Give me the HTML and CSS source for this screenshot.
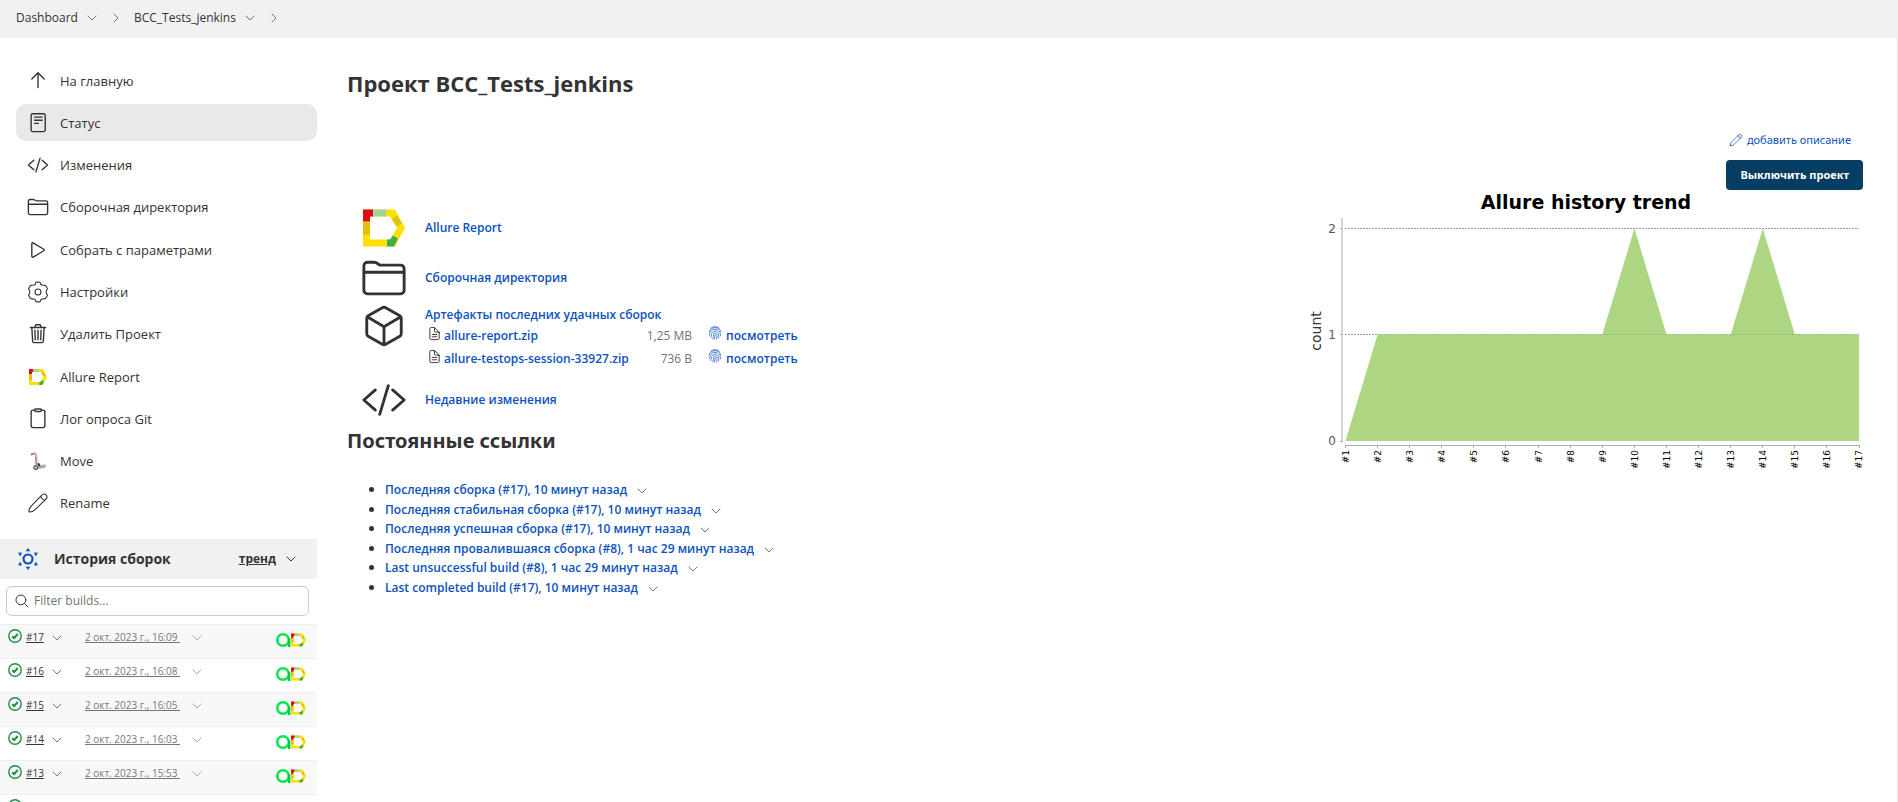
FILE: index.html
```html
<!DOCTYPE html>
<html lang="ru">
<head>
<meta charset="utf-8">
<title>BCC_Tests_jenkins [Jenkins]</title>
<link rel="stylesheet" href="styles.css">
</head>
<body>
<svg class="sprite" aria-hidden="true">
  <symbol id="chevron" viewBox="0 0 10 6"><path d="M1 1l4 4 4-4" class="line"/></symbol>
  <symbol id="chevron-right" viewBox="0 0 6 10"><path d="M1 1l4 4-4 4" class="line"/></symbol>
  <symbol id="up" viewBox="0 0 512 512"><path class="line" d="M112 208l144-144 144 144M256 70v336"/></symbol>
  <symbol id="status" viewBox="0 0 512 512"><rect class="line" x="96" y="40" width="328" height="416" rx="40"/><path class="line" d="M176 118h176M176 192h176M176 266h88"/></symbol>
  <symbol id="code" viewBox="0 0 512 512"><path class="line" d="M160 368L32 256l128-112M352 368l128-112-128-112M304 96l-96 320"/></symbol>
  <symbol id="folder" viewBox="0 0 512 512"><path class="line" d="M440 432H72a40 40 0 01-40-40V120a40 40 0 0140-40h75.89a40 40 0 0122.19 6.72l27.84 18.56a40 40 0 0022.19 6.72H440a40 40 0 0140 40v240a40 40 0 01-40 40zM32 192h448"/></symbol>
  <symbol id="play" viewBox="0 0 512 512"><path class="line" d="M112 111v290c0 17.44 17 28.52 31 20.16l247.9-148.37c12.12-7.25 12.12-26.33 0-33.58L143 90.84c-14-8.36-31 2.72-31 20.16z"/></symbol>
  <symbol id="gear" viewBox="0 0 20 20"><path class="thin" d="M8.1 1.2Q10 .8 11.9 1.2Q12.2 3.2 13.7 3.6Q15.2 3.9 16.7 4Q18 5.4 18.6 7.2Q17.4 8.6 17.4 10T18.6 12.8Q18 14.6 16.7 16Q15.2 16.1 13.7 16.4Q12.2 16.8 11.9 18.8Q10 19.2 8.1 18.8Q7.8 16.8 6.3 16.4Q4.8 16.1 3.3 16Q2 14.6 1.4 12.8Q2.6 11.4 2.6 10T1.4 7.2Q2 5.4 3.3 4Q4.8 3.9 6.3 3.6Q7.8 3.2 8.1 1.2z"/><circle class="thin" cx="10" cy="10" r="2.700"/></symbol>
  <symbol id="trash" viewBox="0 0 512 512"><path class="line" d="M112 104l20 320c.95 18.49 14.4 32 32 32h184c17.67 0 30.87-13.51 32-32l20-320M80 104h352M192 104V64a24 24 0 0124-24h80a24 24 0 0124 24v40M256 168v224M184 168l8 224M328 168l-8 224"/></symbol>
  <symbol id="allure" viewBox="0 0 42 37"><path fill="#ffe000" d="M0 0h32l10 18.500l-10 18.500H0zM7 7v23h20l7-11.500L27 7z" fill-rule="evenodd"/><path fill="#e30613" d="M0 0h10v7H7v5H0z"/><path fill="#a3d39c" d="M10 0h13v7H10z"/><path fill="#dfc00f" d="M0 13h7v12H0zM29 10l5-4 5 8-5 3z"/><path fill="#3fae49" d="M24 30h3l3-4 5 3-4 8h-7z"/></symbol>
  <symbol id="clipboard" viewBox="0 0 512 512"><path class="line" d="M336 48h32a48 48 0 0148 48v312a48 48 0 01-48 48H144a48 48 0 01-48-48V96a48 48 0 0148-48h32"/><rect class="line" x="176" y="24" width="160" height="56" rx="26"/></symbol>
  <symbol id="move" viewBox="0 0 20 20"><path d="M3.500 4.200l3.500-1.200 1 .6" stroke="#e2574c" stroke-width="1.500" fill="none"/><path d="M7.500 3l1.200 4-.4 6" stroke="#bbb" stroke-width="2" fill="none"/><path d="M7.500 6l1.200 8" stroke="#777" stroke-width=".7"/><circle cx="8" cy="16" r="1.800" fill="#bbb" stroke="#555" stroke-width="1"/><path d="M10 14.500l7-1.500v3l-7 1.500z" fill="#aaa"/><path d="M10 12l1.500 2.500" stroke="#333" stroke-width="2"/></symbol>
  <symbol id="pencil" viewBox="0 0 20 20"><path class="thin" d="M1.800 18.200Q1.600 15 4 12.600L13.200 3Q15.400.8 17.300 2.700T17 6.800L7.400 16Q5 18.400 1.800 18.200zM12.600 3.600Q13 6.800 16.400 7.400"/></symbol>
  <symbol id="cube" viewBox="0 0 512 512"><path class="line" d="M448 341.370V170.610A32 32 0 00432.110 143l-152-88.460a47.940 47.940 0 00-48.240 0L79.890 143A32 32 0 0064 170.610v170.760A32 32 0 0079.890 369l152 88.460a48 48 0 0048.240 0l152-88.460A32 32 0 00448 341.370zM69 154l187 110 187-110M256 464V264"/></symbol>
  <symbol id="doc" viewBox="0 0 512 512"><path class="line" d="M416 221.250V416a48 48 0 01-48 48H144a48 48 0 01-48-48V96a48 48 0 0148-48h98.750a32 32 0 0122.620 9.370l141.260 141.260a32 32 0 019.370 22.620zM256 56v120a32 32 0 0032 32h120M176 288h160M176 368h160"/></symbol>
  <symbol id="finger" viewBox="0 0 20 20"><path class="thin" d="M4 3a10 10 0 0112 0M1.500 8.500a9 9 0 0117 0M2 13.500c1-6 3-8.500 8-8.500s8 3 7.800 9M4 16.500c1.200-6 2-9 6-9s5.600 3 5.400 9.500M7 18.500c1.500-5 .5-8.500 3-8.500s3.400 3.500 2.300 9M10 12.500q.3 3-.8 6"/></symbol>
  <symbol id="search" viewBox="0 0 512 512"><circle class="line" cx="221" cy="221" r="157"/><path class="line" d="M338 338l110 110"/></symbol>
  <symbol id="sun" viewBox="0 0 20 22"><circle cx="10" cy="11" r="4.500" fill="none" stroke="#0b52bd" stroke-width="2.200"/><path fill="#0b52bd" d="M10 0l2.300 3.200H7.700zM10 22l2.300-3.200H7.700zM.2 4.400l4 .4-2.200 3.600zM19.800 4.400l-4 .4 2.200 3.600zM.2 17.600l4-.4-2.200-3.600zM19.800 17.600l-4-.4 2.200-3.600z"/></symbol>
  <symbol id="ok" viewBox="0 0 14 14"><circle cx="7" cy="7" r="6.200" fill="none" stroke="#1e8f45" stroke-width="1.400"/><path d="M4.200 7.200L6.200 9l3.600-4" fill="none" stroke="#1e8f45" stroke-width="2"/></symbol>
  <symbol id="testops" viewBox="0 0 16 16"><circle cx="7.500" cy="8" r="6.200" fill="none" stroke="#00e64d" stroke-width="2.600"/><path d="M14 6v9.500" stroke="#00c853" stroke-width="2.600"/></symbol>
</svg>

<nav class="crumbs" aria-label="Breadcrumbs">
  <a href="#">Dashboard</a><svg class="chev"><use href="#chevron"/></svg><svg class="chev-right"><use href="#chevron-right"/></svg>
  <a href="#">BCC_Tests_jenkins</a><svg class="chev"><use href="#chevron"/></svg><svg class="chev-right"><use href="#chevron-right"/></svg>
</nav>

<div class="page">
  <div class="side">
    <nav class="tasks">
      <a class="task" href="#"><svg><use href="#up"/></svg>На главную</a>
      <a class="task active" href="#"><svg><use href="#status"/></svg>Статус</a>
      <a class="task" href="#"><svg><use href="#code"/></svg>Изменения</a>
      <a class="task" href="#"><svg><use href="#folder"/></svg>Сборочная директория</a>
      <a class="task" href="#"><svg><use href="#play"/></svg>Собрать с параметрами</a>
      <a class="task" href="#"><svg><use href="#gear"/></svg>Настройки</a>
      <a class="task" href="#"><svg><use href="#trash"/></svg>Удалить Проект</a>
      <a class="task" href="#"><svg class="logo"><use href="#allure"/></svg>Allure Report</a>
      <a class="task" href="#"><svg><use href="#clipboard"/></svg>Лог опроса Git</a>
      <a class="task" href="#"><svg><use href="#move"/></svg>Move</a>
      <a class="task" href="#"><svg><use href="#pencil"/></svg>Rename</a>
    </nav>
    <section class="history">
      <header class="history-head">
        <svg class="sun"><use href="#sun"/></svg>
        <h2>История сборок</h2>
        <a href="#">тренд</a>
        <svg class="chev dark"><use href="#chevron"/></svg>
      </header>
      <label class="filter"><svg><use href="#search"/></svg><input type="text" placeholder="Filter builds..." aria-label="Filter builds"></label>
      <div class="builds">
        <div class="build"><svg class="ok"><use href="#ok"/></svg><a class="num" href="#">#17</a><svg class="chev"><use href="#chevron"/></svg><a class="date" href="#">2 окт. 2023 г., 16:09&nbsp;</a><svg class="chev pale"><use href="#chevron"/></svg><span class="badges"><svg><use href="#testops"/></svg><svg><use href="#allure"/></svg></span></div>
        <div class="build"><svg class="ok"><use href="#ok"/></svg><a class="num" href="#">#16</a><svg class="chev"><use href="#chevron"/></svg><a class="date" href="#">2 окт. 2023 г., 16:08&nbsp;</a><svg class="chev pale"><use href="#chevron"/></svg><span class="badges"><svg><use href="#testops"/></svg><svg><use href="#allure"/></svg></span></div>
        <div class="build"><svg class="ok"><use href="#ok"/></svg><a class="num" href="#">#15</a><svg class="chev"><use href="#chevron"/></svg><a class="date" href="#">2 окт. 2023 г., 16:05&nbsp;</a><svg class="chev pale"><use href="#chevron"/></svg><span class="badges"><svg><use href="#testops"/></svg><svg><use href="#allure"/></svg></span></div>
        <div class="build"><svg class="ok"><use href="#ok"/></svg><a class="num" href="#">#14</a><svg class="chev"><use href="#chevron"/></svg><a class="date" href="#">2 окт. 2023 г., 16:03&nbsp;</a><svg class="chev pale"><use href="#chevron"/></svg><span class="badges"><svg><use href="#testops"/></svg><svg><use href="#allure"/></svg></span></div>
        <div class="build"><svg class="ok"><use href="#ok"/></svg><a class="num" href="#">#13</a><svg class="chev"><use href="#chevron"/></svg><a class="date" href="#">2 окт. 2023 г., 15:53&nbsp;</a><svg class="chev pale"><use href="#chevron"/></svg><span class="badges"><svg><use href="#testops"/></svg><svg><use href="#allure"/></svg></span></div>
        <div class="build"><svg class="ok"><use href="#ok"/></svg></div>
      </div>
    </section>
  </div>

  <main class="main">
    <h1>Проект BCC_Tests_jenkins</h1>
    <div class="columns">
      <div class="info">
        <div class="entry"><svg class="big logo"><use href="#allure"/></svg><a href="#">Allure Report</a></div>
        <div class="entry"><svg class="big"><use href="#folder"/></svg><a href="#">Сборочная директория</a></div>
        <div class="entry artifacts"><svg class="big"><use href="#cube"/></svg>
          <div>
            <a href="#">Артефакты последних удачных сборок</a>
            <table class="files">
              <tr><td><svg class="doc"><use href="#doc"/></svg></td><td><a href="#">allure-report.zip</a></td><td class="size">1,25 MB</td><td class="view"><svg class="finger"><use href="#finger"/></svg><a href="#">посмотреть</a></td></tr>
              <tr><td><svg class="doc"><use href="#doc"/></svg></td><td><a href="#">allure-testops-session-33927.zip</a></td><td class="size">736 B</td><td class="view"><svg class="finger"><use href="#finger"/></svg><a href="#">посмотреть</a></td></tr>
            </table>
          </div>
        </div>
        <div class="entry"><svg class="big"><use href="#code"/></svg><a href="#">Недавние изменения</a></div>
        <h2>Постоянные ссылки</h2>
        <ul class="permalinks">
          <li><a href="#">Последняя сборка (#17), 10 минут назад</a><svg class="chev"><use href="#chevron"/></svg></li>
          <li><a href="#">Последняя стабильная сборка (#17), 10 минут назад</a><svg class="chev"><use href="#chevron"/></svg></li>
          <li><a href="#">Последняя успешная сборка (#17), 10 минут назад</a><svg class="chev"><use href="#chevron"/></svg></li>
          <li><a href="#">Последняя провалившаяся сборка (#8), 1 час 29 минут назад</a><svg class="chev"><use href="#chevron"/></svg></li>
          <li><a href="#">Last unsuccessful build (#8), 1 час 29 минут назад</a><svg class="chev"><use href="#chevron"/></svg></li>
          <li><a href="#">Last completed build (#17), 10 минут назад</a><svg class="chev"><use href="#chevron"/></svg></li>
        </ul>
      </div>
      <aside class="aside">
        <a class="describe" href="#"><svg><use href="#pencil"/></svg>добавить описание</a>
        <button class="disable" type="button">Выключить проект</button>
        <svg class="chart" viewBox="0 0 563 290" role="img" aria-label="Allure history trend">
          <text class="chart-title" x="286" y="19" text-anchor="middle">Allure history trend</text>
          <path class="grid" d="M45 38.500H559M45 144.500H559"/>
          <path class="area" d="M45.500 251L77.600 144.500H302.300L334.400 38.500L366.500 144.500H430.700L462.800 38.500L494.900 144.500H559V251z"/>
          <path class="grid faint" d="M78 144.500H559"/>
          <path class="axis" d="M42 28V252"/>
          <path class="tick" d="M40 38.500h2M40 144.500h2M40 251.500h2M45 255.500H559.500M45.500 255v3M77.500 255v3M109.500 255v3M141.500 255v3M173.500 255v3M205.500 255v3M238.500 255v3M270.500 255v3M302.500 255v3M334.500 255v3M366.500 255v3M398.500 255v3M430.500 255v3M462.500 255v3M494.500 255v3M526.500 255v3M559.500 255v3"/>
          <g class="ylab" text-anchor="end"><text x="36" y="43">2</text><text x="36" y="149">1</text><text x="36" y="255">0</text></g>
          <text class="yname" transform="translate(21 141) rotate(-90)" text-anchor="middle">count</text>
          <g class="xlab" text-anchor="end">
            <text transform="translate(49 260) rotate(-90)">#1</text><text transform="translate(81 260) rotate(-90)">#2</text><text transform="translate(113 260) rotate(-90)">#3</text><text transform="translate(145 260) rotate(-90)">#4</text><text transform="translate(177 260) rotate(-90)">#5</text><text transform="translate(209 260) rotate(-90)">#6</text><text transform="translate(242 260) rotate(-90)">#7</text><text transform="translate(274 260) rotate(-90)">#8</text><text transform="translate(306 260) rotate(-90)">#9</text><text transform="translate(338 260) rotate(-90)">#10</text><text transform="translate(370 260) rotate(-90)">#11</text><text transform="translate(402 260) rotate(-90)">#12</text><text transform="translate(434 260) rotate(-90)">#13</text><text transform="translate(466 260) rotate(-90)">#14</text><text transform="translate(498 260) rotate(-90)">#15</text><text transform="translate(530 260) rotate(-90)">#16</text><text transform="translate(562 260) rotate(-90)">#17</text>
          </g>
        </svg>
      </aside>
    </div>
  </main>
</div>
</body>
</html>
```
FILE: styles.css
```css
* { box-sizing: border-box; }
html { overflow: hidden; }
body { margin: 0; background: #fff; color: #333; font: 12px/20px "Open Sans", "Noto Sans", sans-serif; }
a { color: #0b52bd; text-decoration: none; }
h1, h2 { margin: 0; font-weight: 700; }
svg { flex: none; color: #333; }
.sprite { position: absolute; width: 0; height: 0; }
.line { fill: none; stroke: currentColor; stroke-width: 32; stroke-linecap: round; stroke-linejoin: round; }
.thin { fill: none; stroke: currentColor; stroke-width: 1; stroke-linecap: round; stroke-linejoin: round; }
#chevron .line, #chevron-right .line { stroke-width: 1; }
.chev { width: 10px; height: 6px; color: #777; }
.chev-right { width: 6px; height: 10px; color: #777; }
.chev.dark { color: #333; }
.chev.pale { color: #aaa; }

.crumbs { display: flex; align-items: center; height: 38px; padding: 0 16px 2px; background: #f1f1f1; font-size: 12px; }
.crumbs a { color: #333; }
.crumbs .chev { margin-left: 9px; }
.crumbs .chev-right { margin: 0 15px 0 16px; }

.page { display: flex; border-right: 1px solid #e8e8e8; height: calc(100vh - 38px); overflow: hidden; }
.side { flex: none; width: 317px; }
.tasks { display: flex; flex-direction: column; justify-content: space-between; min-height: 460px; margin: 24px 0 17px 16px; }
.task { display: flex; align-items: center; gap: 11px; height: 37px; padding-left: 11px; border-radius: 10px; color: #333; font-size: 13px; }
.task.active { background: #e9e9e9; }
.task svg { width: 22px; height: 22px; }
.task .logo { width: 18px; margin: 0 2px; }

.history-head { display: flex; align-items: center; height: 40px; padding: 0 21px 0 18px; background: #f1f1f1; }
.history-head h2 { flex: 1; margin-left: 16px; font-size: 14px; }
.history-head a { color: #333; font-weight: 700; text-decoration: underline; }
.history-head .chev { margin-left: 10px; }
.sun { width: 20px; height: 22px; }
.filter { display: flex; align-items: center; gap: 4px; height: 30px; margin: 7px 8px 8px 6px; padding: 0 7px; border: 1px solid #c3ccd1; border-radius: 6px; }
.filter svg { width: 16px; height: 16px; }
.filter input { flex: 1; min-width: 0; padding: 0; border: 0; outline: 0; background: none; font: inherit; }
.filter input::placeholder { color: #737373; }
.build { display: flex; align-items: flex-start; height: 34px; padding: 4px 11px 0 8px; border-top: 1px solid #f0f0f0; font-size: 10px; line-height: 16px; }
.build:nth-child(odd) { background: #f8f8f8; }
.build a { text-decoration: underline; }
.build .chev { margin: 6px 23px 0 8px; }
.build .pale { margin-left: 12px; }
.ok { width: 14px; height: 14px; }
.num { margin-left: 4px; color: #333; }
.date { color: #777; }
.badges { display: flex; align-items: center; margin: 3px 0 0 auto; }
.badges svg { width: 15px; height: 16px; }

.main { flex: 1; padding: 31px 34px 0 30px; }
h1 { font-size: 22px; line-height: 28px; }
.columns { display: flex; justify-content: space-between; margin-top: 33px; }
.info { padding-top: 73px; }
.info a { font-weight: 600; }
.entry { display: flex; align-items: center; gap: 18px; min-height: 50px; padding-left: 14px; }
.artifacts { min-height: 72px; align-items: flex-start; }
.artifacts > div { padding-top: 2px; }
.big { width: 46px; height: 46px; }
.big.logo { width: 42px; margin: 0 2px; }
.files { border-spacing: 0; }
.files td { padding: 0 0 1px; height: 23px; }
.files td:first-child { padding-left: 2px; width: 19px; }
.doc { width: 15px; height: 15px; }
.files .size { padding-left: 18px; color: #737373; text-align: right; }
.files .view { padding-left: 16px; }
.finger { width: 14px; height: 14px; margin-right: 4px; color: #0b52bd; }
.info h2 { margin-top: 2px; font: 700 20px/28px "Noto Sans", sans-serif; }
.permalinks { margin: 25px 0; padding-left: 38px; font-size: 13px; line-height: 1.5; }
.permalinks a { font-size: 12px; }
.permalinks .chev { margin-left: 10px; }

.aside { display: flex; flex-direction: column; align-items: flex-end; flex: 0 1 563px; }
.describe { display: flex; align-items: center; gap: 4px; margin-right: 12px; font: 11px/20px "Noto Sans", sans-serif; }
.describe svg { width: 14px; height: 14px; color: #0b52bd; }
.disable { height: 30px; margin-top: 10px; padding: 0 14px; border: 0; border-radius: 4px; background: #063e63; color: #fff; font: 700 11px/20px "Noto Sans", sans-serif; }
.chart { width: 100%; }
.chart text { font-family: "DejaVu Sans", sans-serif; }
.chart .chart-title { font-size: 19px; font-weight: 700; fill: #000; }
.grid { stroke: #999; stroke-dasharray: 2 1; fill: none; }
.grid.faint { stroke: #95bd78; }
.area { fill: #add683; }
.axis { stroke: #d5d5d5; stroke-width: 2; }
.tick { stroke: #aaa; fill: none; }
.ylab { font-size: 12px; fill: #555; }
.yname { font-size: 14px; fill: #333; }
.xlab { font-size: 9px; fill: #000; }
```
